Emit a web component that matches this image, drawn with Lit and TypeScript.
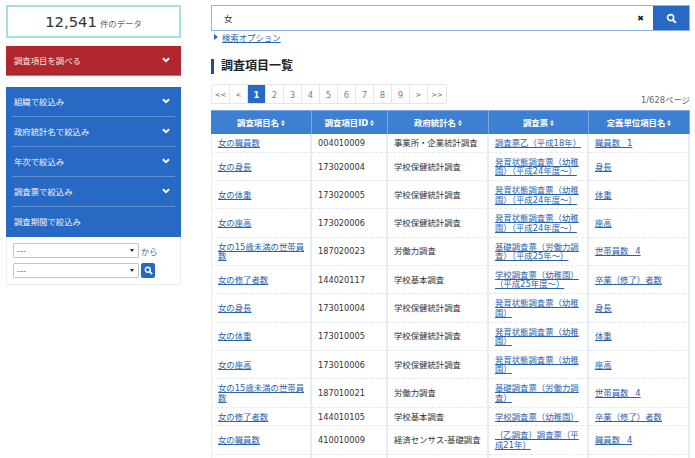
import { LitElement, html, css, svg } from "lit";
import { customElement } from "lit/decorators.js";

const chevron = html`<svg class="chev" viewBox="0 0 8 6" width="8" height="6">
  <path d="M.9 1.2 4 4.2 7.1 1.2" fill="none" stroke="#fff" stroke-width="1.9" />
</svg>`;

const searchIcon = (size: number) => html`<svg viewBox="0 0 12 12" width=${size} height=${size}>
  ${svg`<circle cx="5" cy="5" r="3.3" fill="none" stroke="#fff" stroke-width="1.8" />
  <path d="M7.6 7.6 10.8 10.8" stroke="#fff" stroke-width="2.2" />`}
</svg>`;

const sortIcon = html`<svg class="sort" viewBox="0 0 4 6" width="4" height="6">
  <path d="M2 0 4 2.5H0ZM2 6 0 3.5H4Z" fill="#fff" />
</svg>`;

const school = "学校保健統計調査";
const labor = "労働力調査";
const basic = "学校基本調査";
const r24 = "発育状態調査票（幼稚園）（平成24年度～）";
const rNo = "発育状態調査票（幼稚園）";

// name, id, survey, form, unit
const ROWS: string[][] = [
  ["女の職員数", "004010009", "事業所・企業統計調査", "調査票乙（平成18年）", "職員数\u2002 1"],
  ["女の身長", "173020004", school, r24, "身長"],
  ["女の体重", "173020005", school, r24, "体重"],
  ["女の座高", "173020006", school, r24, "座高"],
  ["女の15歳未満の世帯員数", "187020023", labor, "基礎調査票（労働力調査）（平成25年～）", "世帯員数\u2002 4"],
  ["女の修了者数", "144020117", basic, "学校調査票（幼稚園）（平成25年度～）", "卒業（修了）者数"],
  ["女の身長", "173010004", school, rNo, "身長"],
  ["女の体重", "173010005", school, rNo, "体重"],
  ["女の座高", "173010006", school, rNo, "座高"],
  ["女の15歳未満の世帯員数", "187010021", labor, "基礎調査票（労働力調査）", "世帯員数\u2002 4"],
  ["女の修了者数", "144010105", basic, "学校調査票（幼稚園）", "卒業（修了）者数"],
  ["女の職員数", "410010009", "経済センサス-基礎調査", "（乙調査）調査票（平成21年）", "職員数\u2002 4"],
  ["", "", "", "", ""],
];

const HEADERS = ["調査項目名", "調査項目ID", "政府統計名", "調査票", "定義単位項目名"];
const PAGES = ["<<", "<", "1", "2", "3", "4", "5", "6", "7", "8", "9", ">", ">>"];
const FILTERS = ["組織で絞込み", "政府統計名で絞込み", "年次で絞込み", "調査票で絞込み"];

@customElement("app-root")
export class AppRoot extends LitElement {
  static styles = css`
    :host {
      display: block;
      height: 458px;
      overflow: hidden;
      background: #fff;
      color: #333;
      font-family: "DejaVu Sans", "Noto Sans CJK JP", sans-serif;
      font-size: 8.4px;
    }

    .page {
      display: grid;
      grid-template-columns: 175px 479px;
      column-gap: 30px;
      padding: 5px 0 0 6px;
    }

    /* Sidebar */
    .count {
      height: 33px;
      box-sizing: border-box;
      border: 2px solid #a3e2da;
      display: flex;
      align-items: baseline;
      justify-content: center;
      gap: 3px;
      line-height: 30px;
      margin-bottom: 8px;
    }
    .count b {
      font-weight: 400;
      font-size: 14.8px;
    }
    .count span {
      color: #666;
    }

    .menu-row {
      height: 30px;
      display: flex;
      align-items: center;
      justify-content: space-between;
      padding: 0 11px 2px 8px;
      color: #eef4fb;
      box-sizing: border-box;
    }
    .red {
      background: #b0272e;
      color: #f8e4e4;
      border-bottom: 1px solid #d4686c;
      margin-bottom: 11px;
    }
    .blue {
      background: #2869c4;
      padding: 0 6px;
    }
    .blue .menu-row {
      padding: 0 5px 2px 2px;
      border-bottom: 1px solid #5f8fd3;
    }
    .blue .menu-row:last-child {
      border-bottom: none;
    }

    .period {
      border: 1px solid #eee;
      border-top: none;
      padding: 6px 6px;
      display: grid;
      grid-template-columns: 126px auto;
      gap: 5px 2px;
      align-items: center;
      height: 48px;
      box-sizing: border-box;
      color: #666;
    }
    .select {
      height: 15px;
      box-sizing: border-box;
      border: 1px solid #c4c4c4;
      border-radius: 1px;
      display: flex;
      align-items: center;
      justify-content: space-between;
      padding: 0 4px 0 3px;
      color: #777;
    }
    .caret {
      border: 2.5px solid transparent;
      border-top: 3.5px solid #222;
      border-bottom: none;
    }
    .go {
      width: 14px;
      height: 15px;
      background: #2869c4;
      border-radius: 2px;
      display: flex;
      align-items: center;
      justify-content: center;
    }

    /* Search */
    .search {
      height: 26px;
      box-sizing: border-box;
      border: 1px solid #8fb3e3;
      display: flex;
      align-items: center;
      padding-left: 12px;
    }
    .search .term {
      flex: 1;
    }
    .clear {
      margin-right: 9px;
      font-size: 8px;
      font-weight: 700;
      color: #222;
    }
    .search-btn {
      width: 36px;
      align-self: stretch;
      background: #2869c4;
      display: flex;
      align-items: center;
      justify-content: center;
    }
    .options {
      display: flex;
      align-items: center;
      gap: 4px;
      height: 11px;
      padding-left: 3px;
    }
    .options i {
      border: 3px solid transparent;
      border-left: 4px solid #2869c4;
      border-right: none;
    }
    a {
      color: #2a63ad;
      text-decoration: underline;
    }

    h2 {
      margin: 17px 0 10px;
      border-left: 3px solid #1d4f9e;
      padding-left: 7px;
      font-size: 12px;
      line-height: 15px;
      font-weight: 700;
      color: #222;
    }

    .pager-row {
      display: flex;
      justify-content: space-between;
      align-items: flex-end;
      height: 20px;
      margin-bottom: 6px;
    }
    .pager {
      display: flex;
      border: 1px solid #e6e6e6;
      border-radius: 2px;
    }
    .pager span {
      width: 18px;
      height: 18px;
      box-sizing: border-box;
      padding-top: 2px;
      border-right: 1px solid #e6e6e6;
      display: flex;
      align-items: center;
      justify-content: center;
      color: #5a87c4;
    }
    .pager span:last-child {
      border-right: none;
    }
    .pager .arrow {
      color: #666;
      font-size: 7px;
    }
    .pager .on {
      background: #2869c4;
      color: #fff;
      font-weight: 700;
    }
    .total {
      color: #666;
      line-height: 11px;
      margin-bottom: -2px;
    }

    /* Table */
    table {
      width: 479px;
      table-layout: fixed;
      border-collapse: separate;
      border-spacing: 0;
      line-height: 9.45px;
    }
    th {
      height: 24px;
      padding: 2px 0 0;
      background: #3d80d3;
      color: #fff;
      font-weight: 700;
      border-right: 1px solid #7aa7e0;
      border-top: 1px solid #7aa7e0;
      box-sizing: border-box;
    }
    .sort {
      margin-left: 2px;
    }
    td {
      padding: 5px 4px 3.4px 6px;
      vertical-align: middle;
      border-bottom: 1px dashed #e3e9f2;
      border-right: 2px solid #e4edf8;
      word-break: break-all;
    }
    td:first-child {
      border-left: 1px solid #e4edf8;
    }
    td.id {
      font-size: 8.2px;
    }
  `;

  render() {
    return html`
      <div class="page">
        <aside>
          <div class="count"><b>12,541</b><span>件のデータ</span></div>
          <div class="menu-row red">調査項目を調べる ${chevron}</div>
          <div class="blue">
            ${FILTERS.map((f) => html`<div class="menu-row">${f} ${chevron}</div>`)}
            <div class="menu-row">調査期間で絞込み</div>
          </div>
          <div class="period">
            <div class="select">---<i class="caret"></i></div>
            <span>から</span>
            <div class="select">---<i class="caret"></i></div>
            <div class="go">${searchIcon(9)}</div>
          </div>
        </aside>
        <main>
          <div class="search">
            <span class="term">女</span>
            <span class="clear">✖</span>
            <div class="search-btn">${searchIcon(11)}</div>
          </div>
          <div class="options"><i></i><a href="#">検索オプション</a></div>
          <h2>調査項目一覧</h2>
          <div class="pager-row">
            <div class="pager">
              ${PAGES.map(
                (p) =>
                  html`<span class=${p === "1" ? "on" : /\d/.test(p) ? "" : "arrow"}>${p}</span>`
              )}
            </div>
            <div class="total">1/628ページ</div>
          </div>
          <table>
            <colgroup>
              <col style="width:101px" />
              <col style="width:76px" />
              <col style="width:101px" />
              <col style="width:100px" />
              <col style="width:101px" />
            </colgroup>
            <thead>
              <tr>${HEADERS.map((h) => html`<th>${h}${sortIcon}</th>`)}</tr>
            </thead>
            <tbody>
              ${ROWS.map(
                (r) => html`<tr>
                  <td><a href="#">${r[0]}</a></td>
                  <td class="id">${r[1]}</td>
                  <td>${r[2]}</td>
                  <td><a href="#">${r[3]}</a></td>
                  <td><a href="#">${r[4]}</a></td>
                </tr>`
              )}
            </tbody>
          </table>
        </main>
      </div>
    `;
  }
}
